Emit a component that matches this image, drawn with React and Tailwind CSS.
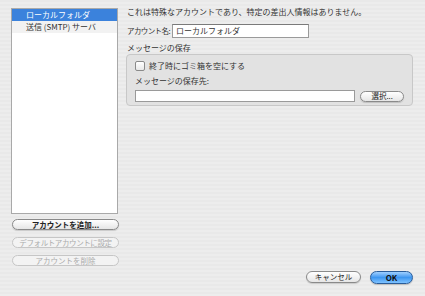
import React from 'react';

const font = { fontFamily: '"Noto Sans CJK JP", "Liberation Sans", sans-serif' };

function PillButton({ children, disabled, className = '' }) {
  return (
    <div
      className={`flex items-center justify-center whitespace-nowrap rounded-full border text-[7.5px] leading-none ${
        disabled
          ? 'border-[#c6c6c6] text-[#ababab] bg-[#f3f3f3]'
          : 'border-[#8a8a8a] text-[#222] bg-gradient-to-b from-white to-[#e6e6e6] shadow-[0_1px_1px_rgba(0,0,0,0.15)]'
      } ${className}`}
    >
      {children}
    </div>
  );
}

export default function App() {
  return (
    <div
      className="w-[425px] h-[296px] bg-[#ececec] bg-[repeating-linear-gradient(0deg,#ededed_0px,#ededed_2px,#e9e9e9_2px,#e9e9e9_4px)] text-[#333] relative overflow-hidden"
      style={font}
    >
      <div className="flex h-full">
        {/* 左側: アカウント一覧 */}
        <div className="w-[120px] shrink-0 pl-[11px] pt-[8px] flex flex-col">
          <div className="w-[107px] h-[206px] bg-white border border-[#a9a9a9] flex flex-col">
            <div className="h-[12px] bg-[#3b82dc] text-white text-[8px] leading-[12px] pl-[14px]">ローカルフォルダ</div>
            <div className="h-[12px] bg-[#f2f2f2] text-[#333] text-[8px] leading-[12px] pl-[14px]">送信 (SMTP) サーバ</div>
          </div>
          <div className="flex flex-col gap-[7px] mt-[5px] pl-[1px]">
            <PillButton className="w-[107px] h-[11px] font-semibold">アカウントを追加...</PillButton>
            <PillButton disabled className="w-[107px] h-[11px] tracking-[-0.4px]">デフォルトアカウントに設定</PillButton>
            <PillButton disabled className="w-[107px] h-[11px]">アカウントを削除</PillButton>
          </div>
        </div>

        {/* 右側: 設定 */}
        <div className="flex-1 pl-[7px] pt-[7px] flex flex-col">
          <div className="text-[8px] leading-[10px] h-[10px] whitespace-nowrap">これは特殊なアカウントであり、特定の差出人情報はありません。</div>
          <div className="flex items-center mt-[7px]">
            <span className="text-[7.5px] w-[45px] shrink-0 whitespace-nowrap tracking-[-0.6px]">アカウント名:</span>
            <div className="w-[137px] h-[14px] bg-white border border-[#9a9a9a] border-t-[#7a7a7a] text-[8px] leading-[12px] pl-[3px]">ローカルフォルダ</div>
          </div>
          <div className="text-[8px] mt-[5px] leading-[10px]">メッセージの保存</div>
          <div className="w-[287px] h-[52px] mt-[1px] -ml-[1px] rounded-[4px] border border-[#c8c8c8] bg-[#e2e2e2] px-[8px] pt-[6px]">
            <div className="flex items-center gap-[4px]">
              <div className="w-[10px] h-[10px] rounded-[2px] border border-[#8a8a8a] bg-gradient-to-b from-white to-[#e8e8e8]" />
              <span className="text-[8px] leading-none">終了時にゴミ箱を空にする</span>
            </div>
            <div className="text-[8px] leading-none mt-[6px]">メッセージの保存先:</div>
            <div className="flex items-center mt-[5px]">
              <div className="w-[222px] h-[12px] bg-white border border-[#9a9a9a]" />
              <PillButton className="w-[44px] h-[11px] ml-[5px]">選択...</PillButton>
            </div>
          </div>
          <div className="flex-1" />
          <div className="flex justify-end gap-[9px] pr-[12px] pb-[12px]">
            <PillButton className="w-[55px] h-[12px]">キャンセル</PillButton>
            <div className="w-[43px] h-[13px] rounded-full border border-[#2a5d9a] bg-gradient-to-b from-[#9fd0ff] via-[#3d97f0] to-[#7ec2ff] flex items-center justify-center text-[8px] font-bold leading-none text-[#111] shadow-[0_1px_1px_rgba(0,0,0,0.2)]">
              OK
            </div>
          </div>
        </div>
      </div>
    </div>
  );
}
